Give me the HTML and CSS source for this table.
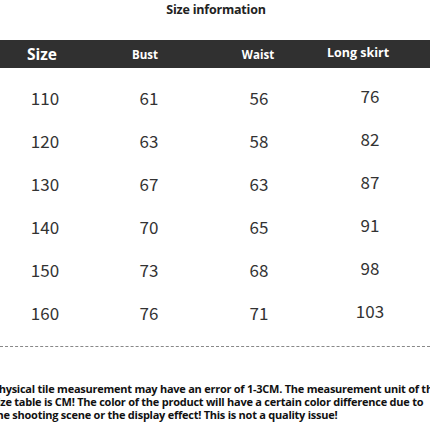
FILE: index.html
```html
<!DOCTYPE html>
<html lang="en">
<head>
    <meta charset="UTF-8">
    <title>Size information</title>
    <link rel="stylesheet" href="styles.css">
</head>
<body>
    <div id="wrap">
        <h1 class="title">Size information</h1>
        <div class="table">
            <div class="row head">
                <div class="c1">Size</div>
                <div class="c2">Bust</div>
                <div class="c3">Waist</div>
                <div class="c4">Long skirt</div>
            </div>
            <div class="row"><div class="c1">110</div><div class="c2">61</div><div class="c3">56</div><div class="c4">76</div></div>
            <div class="row"><div class="c1">120</div><div class="c2">63</div><div class="c3">58</div><div class="c4">82</div></div>
            <div class="row"><div class="c1">130</div><div class="c2">67</div><div class="c3">63</div><div class="c4">87</div></div>
            <div class="row"><div class="c1">140</div><div class="c2">70</div><div class="c3">65</div><div class="c4">91</div></div>
            <div class="row"><div class="c1">150</div><div class="c2">73</div><div class="c3">68</div><div class="c4">98</div></div>
            <div class="row"><div class="c1">160</div><div class="c2">76</div><div class="c3">71</div><div class="c4">103</div></div>
        </div>
        <div class="line"></div>
        <div class="note">
            <p>Physical tile measurement may have an error of 1-3CM. The measurement unit of the</p>
            <p>size table is CM! The color of the product will have a certain color difference due to</p>
            <p>the shooting scene or the display effect! This is not a quality issue!</p>
        </div>
    </div>
</body>
</html>
```

FILE: styles.css
```css
* {
    margin: 0;
    padding: 0;
    box-sizing: border-box;
}
body {
    background-color: #fff;
    font-family: "Noto Sans CJK SC", "Noto Sans", sans-serif;
    color: #333;
}
#wrap {
    width: 430px;
    height: 430px;
    overflow: hidden;
}
.title {
    height: 20px;
    line-height: 20px;
    font-family: "Open Sans", sans-serif;
    font-size: 12.5px;
    font-weight: 700;
    letter-spacing: -0.2px;
    text-align: center;
    color: #222;
    margin-left: 2px;
}
.table {
    margin-top: 20px;
}
.row {
    display: grid;
    grid-template-columns: 90px 118px 102px 1fr;
    height: 43px;
    align-items: center;
    text-align: center;
    font-size: 17px;
}
.row .c4 {
    margin-top: -4px;
}
.head {
    height: 28px;
    background-color: #303030;
    color: #fff;
    font-family: "Open Sans", sans-serif;
    font-weight: 700;
    font-size: 11.5px;
    margin-bottom: 8px;
}
.head .c1 {
    font-size: 15.5px;
    margin-left: -6px;
}
.head .c2 {
    margin-left: -8px;
}
.head .c3 {
    margin-left: -2px;
}
.head .c4 {
    font-size: 12.5px;
    margin-left: -24px;
}
.line {
    margin-top: 12px;
    border-top: 1px dashed #888;
}
.note {
    margin-top: 35px;
    margin-left: -8px;
    font-family: "Open Sans", sans-serif;
    font-weight: 700;
    font-size: 11px;
    line-height: 13px;
    letter-spacing: -0.25px;
    color: #111;
    white-space: nowrap;
}
```
